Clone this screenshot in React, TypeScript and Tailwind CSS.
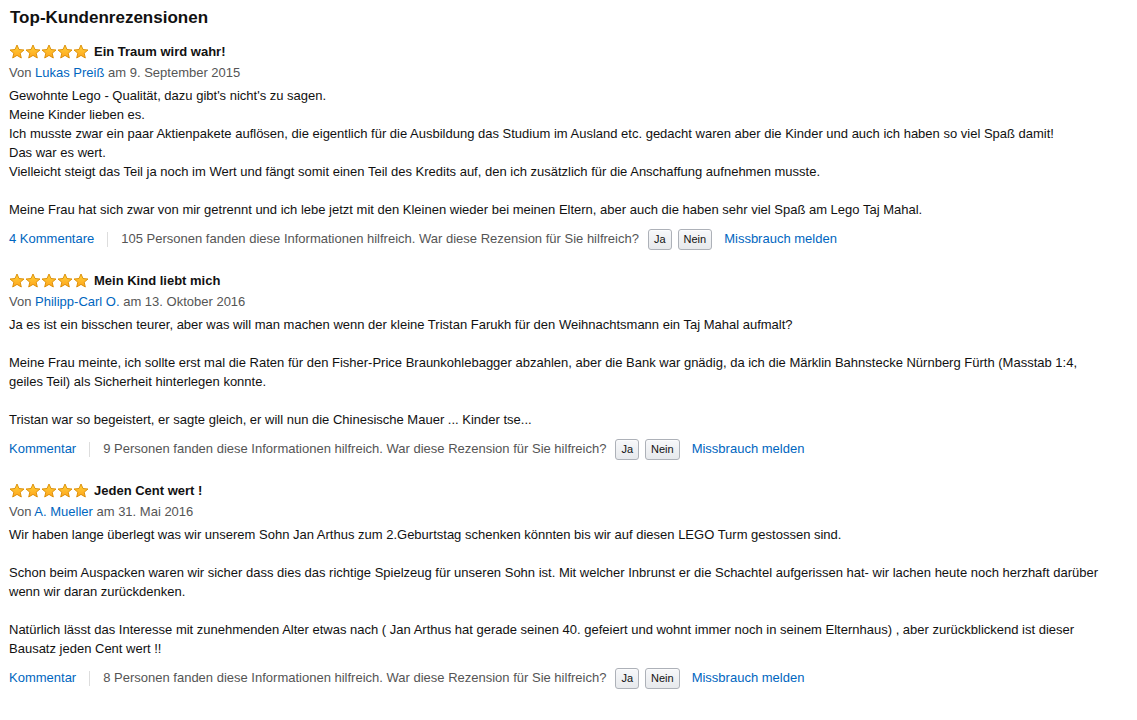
import React from 'react';

type Review = {
  title: string;
  author: string;
  date: string;
  body: string[];
  comments: string;
  helpful: string;
};

const reviews: Review[] = [
  {
    title: 'Ein Traum wird wahr!',
    author: 'Lukas Preiß',
    date: '9. September 2015',
    body: [
      "Gewohnte Lego - Qualität, dazu gibt's nicht's zu sagen.",
      'Meine Kinder lieben es.',
      'Ich musste zwar ein paar Aktienpakete auflösen, die eigentlich für die Ausbildung das Studium im Ausland etc. gedacht waren aber die Kinder und auch ich haben so viel Spaß damit!',
      'Das war es wert.',
      'Vielleicht steigt das Teil ja noch im Wert und fängt somit einen Teil des Kredits auf, den ich zusätzlich für die Anschaffung aufnehmen musste.',
      '',
      'Meine Frau hat sich zwar von mir getrennt und ich lebe jetzt mit den Kleinen wieder bei meinen Eltern, aber auch die haben sehr viel Spaß am Lego Taj Mahal.',
    ],
    comments: '4 Kommentare',
    helpful: '105 Personen fanden diese Informationen hilfreich.',
  },
  {
    title: 'Mein Kind liebt mich',
    author: 'Philipp-Carl O.',
    date: '13. Oktober 2016',
    body: [
      'Ja es ist ein bisschen teurer, aber was will man machen wenn der kleine Tristan Farukh für den Weihnachtsmann ein Taj Mahal aufmalt?',
      '',
      'Meine Frau meinte, ich sollte erst mal die Raten für den Fisher-Price Braunkohlebagger abzahlen, aber die Bank war gnädig, da ich die Märklin Bahnstecke Nürnberg Fürth (Masstab 1:4, geiles Teil) als Sicherheit hinterlegen konnte.',
      '',
      'Tristan war so begeistert, er sagte gleich, er will nun die Chinesische Mauer ... Kinder tse...',
    ],
    comments: 'Kommentar',
    helpful: '9 Personen fanden diese Informationen hilfreich.',
  },
  {
    title: 'Jeden Cent wert !',
    author: 'A. Mueller',
    date: '31. Mai 2016',
    body: [
      'Wir haben lange überlegt was wir unserem Sohn Jan Arthus zum 2.Geburtstag schenken könnten bis wir auf diesen LEGO Turm gestossen sind.',
      '',
      'Schon beim Auspacken waren wir sicher dass dies das richtige Spielzeug für unseren Sohn ist. Mit welcher Inbrunst er die Schachtel aufgerissen hat- wir lachen heute noch herzhaft darüber wenn wir daran zurückdenken.',
      '',
      'Natürlich lässt das Interesse mit zunehmenden Alter etwas nach ( Jan Arthus hat gerade seinen 40. gefeiert und wohnt immer noch in seinem Elternhaus) , aber zurückblickend ist dieser Bausatz jeden Cent wert !!',
    ],
    comments: 'Kommentar',
    helpful: '8 Personen fanden diese Informationen hilfreich.',
  },
];

function Star() {
  return (
    <svg width="16" height="16" viewBox="0 0 16 16">
      <defs>
        <linearGradient id="starFill" x1="0" y1="0" x2="0" y2="1">
          <stop offset="0" stopColor="#ffd23a" />
          <stop offset="1" stopColor="#ffa41c" />
        </linearGradient>
      </defs>
      <path
        d="M8 1 L10 5.5 L15 6 L11.2 9.2 L12.3 14 L8 11.4 L3.7 14 L4.8 9.2 L1 6 L6 5.5 Z"
        fill="url(#starFill)"
        stroke="#d98a00"
        strokeWidth="0.9"
        strokeLinejoin="round"
      />
    </svg>
  );
}

function VoteButton({ label }: { label: string }) {
  return (
    <button
      type="button"
      className="h-[21px] rounded-[3px] border border-[#adb1b8] bg-gradient-to-b from-[#f7f8fa] to-[#e7e9ec] px-[5px] text-[11px] leading-[19px] text-[#111] shadow-[inset_0_1px_0_rgba(255,255,255,0.6)]"
    >
      {label}
    </button>
  );
}

function ReviewItem({ review }: { review: Review }) {
  return (
    <div className="mb-[20px]">
      <div className="flex h-[22px] items-center">
        <div className="flex">
          {[0, 1, 2, 3, 4].map((i) => (
            <Star key={i} />
          ))}
        </div>
        <span className="ml-[5px] text-[13px] font-bold text-[#111]">{review.title}</span>
      </div>
      <div className="text-[13px] leading-[20px] text-[#555]">
        Von <a className="text-[#0066c0]">{review.author}</a> am {review.date}
      </div>
      <div className="mt-[3px] text-[13px] leading-[19px] text-[#111]">
        {review.body.map((line, i) =>
          line === '' ? <div key={i} className="h-[19px]" /> : <div key={i}>{line}</div>
        )}
      </div>
      <div className="mt-[9px] flex h-[22px] items-center text-[13px]">
        <a className="text-[#0066c0]">{review.comments}</a>
        <span className="mx-[13px] h-[15px] w-px bg-[#ddd]" />
        <span className="text-[#555]">
          {review.helpful} War diese Rezension für Sie hilfreich?
        </span>
        <div className="ml-[9px] flex gap-[6px]">
          <VoteButton label="Ja" />
          <VoteButton label="Nein" />
        </div>
        <a className="ml-[12px] text-[#0066c0]">Missbrauch melden</a>
      </div>
    </div>
  );
}

export default function App() {
  return (
    <div className="min-h-[720px] bg-white pl-[9px] pr-[26px] pt-[6px] font-['Liberation_Sans',Arial,sans-serif]">
      <h3 className="mb-[11px] pl-px text-[17px] font-bold leading-[24px] text-[#111]">
        Top-Kundenrezensionen
      </h3>
      {reviews.map((r) => (
        <ReviewItem key={r.title} review={r} />
      ))}
    </div>
  );
}
